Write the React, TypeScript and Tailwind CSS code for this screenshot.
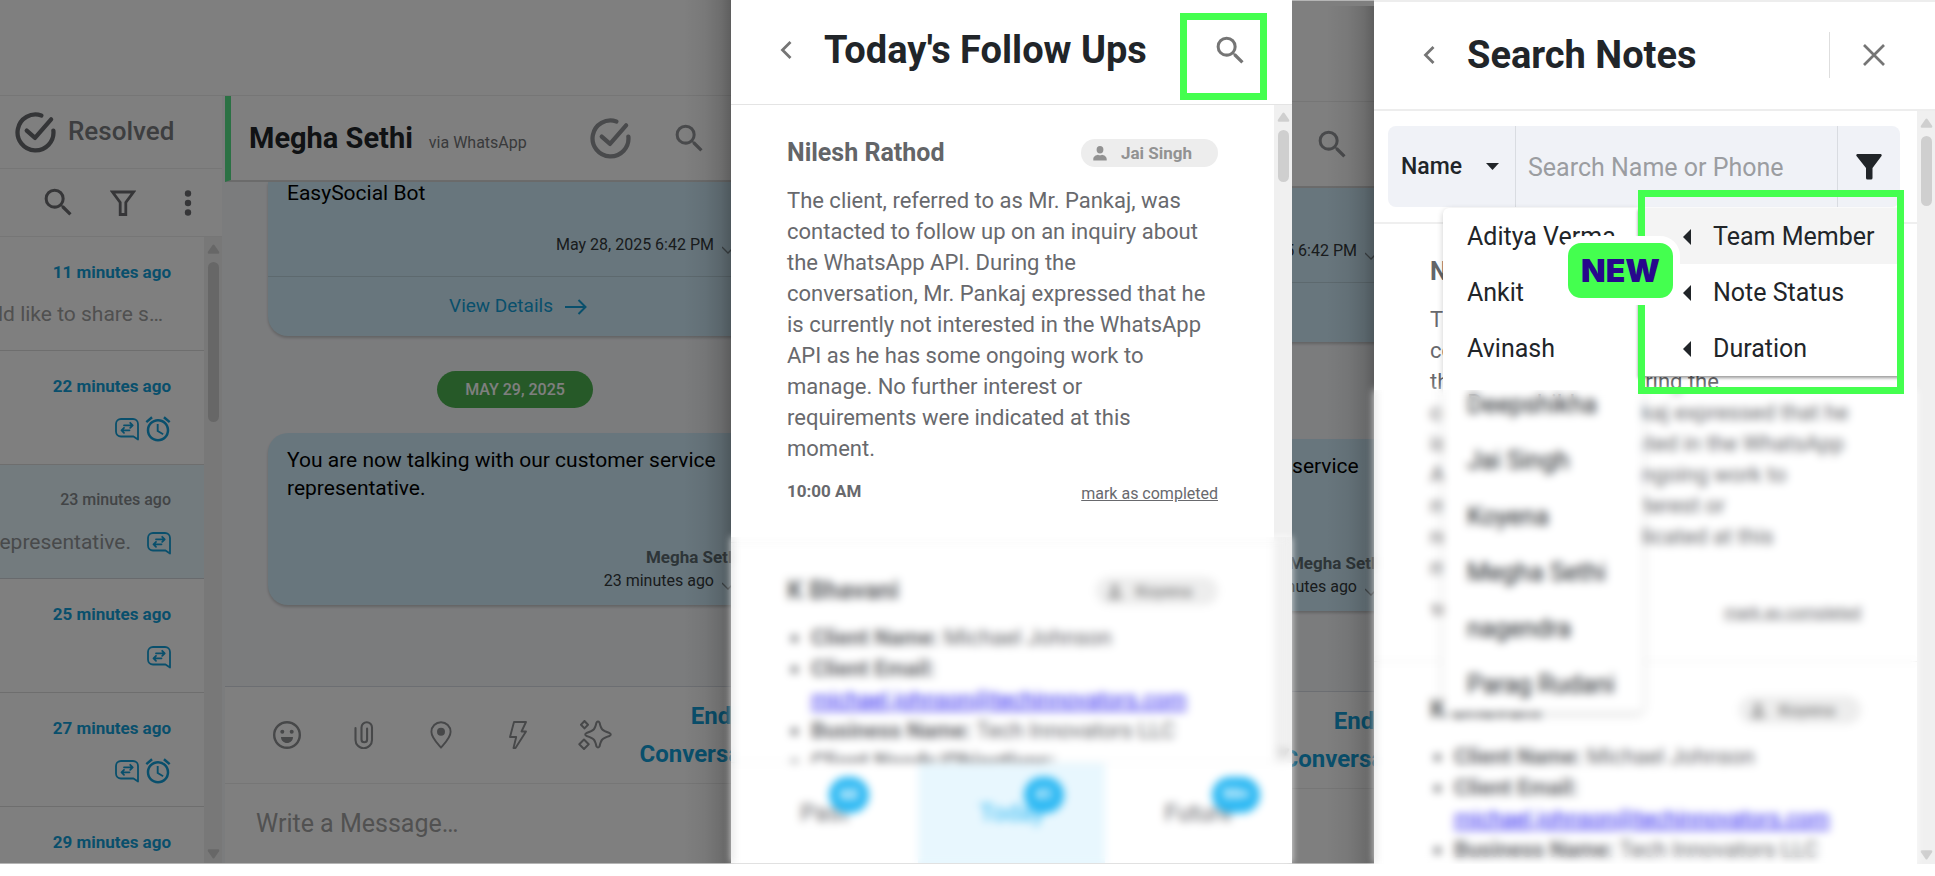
import { ReactNode } from "react";
import { MdAlarm, MdSearch } from "react-icons/md";

type IconProps = { className?: string };

const conversations = [
  { time: "11 minutes ago", preview: "ld like to share s…", swap: false, alarm: false, active: false },
  { time: "22 minutes ago", preview: "", swap: true, alarm: true, active: false },
  { time: "23 minutes ago", preview: "representative.", swap: true, alarm: false, active: true },
  { time: "25 minutes ago", preview: "", swap: true, alarm: false, active: false },
  { time: "27 minutes ago", preview: "", swap: true, alarm: true, active: false },
  { time: "29 minutes ago", preview: "", swap: true, alarm: false, active: false },
];

const members = [
  "Aditya Verma",
  "Ankit",
  "Avinash",
  "Deepshikha",
  "Jai Singh",
  "Koyena",
  "Megha Sethi",
  "nagendra",
  "Parag Rudani",
];

const filters = ["Team Member", "Note Status", "Duration"];

const tabs = [
  { label: "Past", count: "60", active: false },
  { label: "Today", count: "41", active: true },
  { label: "Future", count: "99+", active: false },
];

const CheckCircle = ({ className }: IconProps) => (
  <svg viewBox="0 0 42 42" fill="none" stroke="currentColor" strokeWidth="4.4" strokeLinecap="round" className={className}>
    <path d="M27 3.6A18.4 18.4 0 1 0 39.3 19" />
    <path d="M12 19l8.500 7.500L37 7.500" strokeLinejoin="round" />
  </svg>
);

const FunnelOutline = ({ className }: IconProps) => (
  <svg viewBox="0 0 26 26" fill="none" stroke="currentColor" strokeWidth="2.800" className={className}>
    <path d="M2.500 2h21l-7.700 10.500V24.500h-5.600V12.500z" />
  </svg>
);

const FunnelSolid = ({ className }: IconProps) => (
  <svg viewBox="0 0 26 26" fill="currentColor" className={className}>
    <path d="M1.500 0h23a1.200 1.200 0 0 1 1 1.900L16.500 14v10a1.500 1.500 0 0 1-1.500 1.500h-3.500A1.500 1.500 0 0 1 10 24V14L.5 1.900A1.200 1.200 0 0 1 1.500 0z" />
  </svg>
);

const Dots = ({ className }: IconProps) => (
  <svg viewBox="0 0 8 26" fill="currentColor" className={className}>
    <circle cx="4" cy="3.500" r="3.200" />
    <circle cx="4" cy="13" r="3.200" />
    <circle cx="4" cy="22.500" r="3.200" />
  </svg>
);

const SwapBubble = ({ className }: IconProps) => (
  <svg viewBox="0 0 24 24" fill="none" stroke="currentColor" strokeWidth="1.800" strokeLinecap="round" strokeLinejoin="round" className={className}>
    <path d="M6 2h12a5 5 0 0 1 5 5v15.500l-4.500-3H6a5 5 0 0 1-5-5V7a5 5 0 0 1 5-5z" />
    <path d="M9 8.300h8.500M15.200 5.800l2.500 2.500-2.500 2.500M14.500 13.300H6.500M9 10.800l-2.500 2.500L9 15.800" />
  </svg>
);

const ChevronLeft = ({ className }: IconProps) => (
  <svg viewBox="0 0 12 18" fill="none" stroke="currentColor" strokeWidth="2.800" className={className}>
    <path d="M10.500 1L2.500 9l8 8" />
  </svg>
);

const Close = ({ className }: IconProps) => (
  <svg viewBox="0 0 22 22" fill="none" stroke="currentColor" strokeWidth="2.700" className={className}>
    <path d="M1 1l20 20M21 1L1 21" />
  </svg>
);

const Tick = ({ className }: IconProps) => (
  <svg viewBox="0 0 20 12" fill="none" stroke="currentColor" strokeWidth="1.300" className={className}>
    <path d="M0 4l6 6L15 1" />
  </svg>
);

const ArrowRight = ({ className }: IconProps) => (
  <svg viewBox="0 0 22 16" fill="none" stroke="currentColor" strokeWidth="2" className={className}>
    <path d="M0 8h20.500M13.500 1l7 7-7 7" />
  </svg>
);

const Person = ({ className }: IconProps) => (
  <svg viewBox="0 0 14 15" fill="currentColor" className={className}>
    <ellipse cx="7" cy="3.700" rx="3.400" ry="3.700" />
    <path d="M.3 14.500v-1.500C.3 10.500 3 9 5 8.700a4 4 0 0 0 4 0c2 .3 4.700 1.800 4.700 4.300v1.500z" />
  </svg>
);

const Smile = ({ className }: IconProps) => (
  <svg viewBox="0 0 28 28" fill="none" className={className}>
    <circle cx="14" cy="14" r="12.800" stroke="currentColor" strokeWidth="2.400" />
    <circle cx="9.300" cy="10.800" r="2" fill="currentColor" />
    <circle cx="18.700" cy="10.800" r="2" fill="currentColor" />
    <path d="M8 16h12c0 3.600-2.700 6-6 6s-6-2.400-6-6z" fill="currentColor" />
  </svg>
);

const Clip = ({ className }: IconProps) => (
  <svg viewBox="0 0 20 28" fill="none" stroke="currentColor" strokeWidth="2.100" strokeLinecap="round" className={className}>
    <path d="M1.500 7v12a8 8 0 0 0 16.500 0V6.500a5 5 0 0 0-10.500 0V18.500a2.800 2.800 0 0 0 5.600 0V7.500" />
  </svg>
);

const Pin = ({ className }: IconProps) => (
  <svg viewBox="0 0 22 28" fill="none" className={className}>
    <path d="M11 1.200a9.600 9.600 0 0 1 9.600 9.600c0 6-5.600 11-9.600 15.700C7 21.800 1.400 16.800 1.400 10.800A9.600 9.600 0 0 1 11 1.200z" stroke="currentColor" strokeWidth="1.900" />
    <circle cx="11" cy="10.800" r="4" fill="currentColor" />
  </svg>
);

const Bolt = ({ className }: IconProps) => (
  <svg viewBox="0 0 18 28" fill="none" stroke="currentColor" strokeWidth="1.900" strokeLinejoin="round" className={className}>
    <path d="M5 1h12l-4.500 9.500H17L6.500 27H4.500l2.700-11H1z" />
  </svg>
);

const Sparkles = ({ className }: IconProps) => (
  <svg viewBox="0 0 34 30" fill="none" stroke="currentColor" strokeWidth="2" strokeLinejoin="round" className={className}>
    <path d="M18.500 2.500q1.500-2 3 0c1.500 6.500 2 8 10 10.500q2.500 1.500 0 3c-8 2.500-8.500 4-10 10.500q-1.500 2-3 0c-1.500-6.500-2-8-10-10.500q-2.500-1.500 0-3c8-2.500 8.500-4 10-10.500z" />
    <path d="M6.500 1l3.500 3.700-3.500 3.700L3 4.700zM6 19.500l4.700 4.800L6 29l-4.700-4.700z" />
  </svg>
);

const Triangle = ({ className }: IconProps) => (
  <svg viewBox="0 0 14 10" fill="currentColor" className={className}>
    <path d="M6 .7a1.300 1.300 0 0 1 2 0l5 7.300q.8 1.700-1 2H2q-1.800-.3-1-2z" />
  </svg>
);

const Scrollbar = ({ thumb }: { thumb: ReactNode }) => (
  <div className="flex w-[18px] shrink-0 flex-col items-center justify-between bg-[#f0f0f0] pt-[7px] pb-1 text-[#cfcfcf]">
    <div className="flex flex-col items-center gap-2">
      <Triangle className="h-[10px] w-[13px]" />
      {thumb}
    </div>
    <Triangle className="h-[10px] w-[13px] rotate-180" />
  </div>
);

const ConversationList = () => (
  <aside className="flex h-full w-[225px] shrink-0 flex-col bg-[#f7f8fb]">
    <div className="h-24 shrink-0 border-b border-[#ececec] bg-white" />
    <div className="mr-[3px] flex h-[73px] shrink-0 items-center gap-3 border-b border-[#ececec] bg-white pl-[15px] text-[#696b6f]">
      <CheckCircle className="h-[41px] w-[41px]" />
      <span className="pb-0.5 text-[26px] font-medium text-[#7a7c80]">Resolved</span>
    </div>
    <div className="mr-[3px] flex h-[67px] shrink-0 items-center justify-end bg-white pr-[30px] text-[#6c6d70]">
      <button aria-label="Search conversations" className="mr-[33px]">
        <MdSearch className="h-[37px] w-[37px]" />
      </button>
      <button aria-label="Filter conversations" className="mr-12">
        <FunnelOutline className="h-[26px] w-[26px]" />
      </button>
      <button aria-label="More options">
        <Dots className="h-[26px] w-2" />
      </button>
    </div>
    <div className="mr-[3px] flex min-h-0 flex-1 border-t border-[#ececec]">
      <ul className="min-w-0 flex-1 overflow-hidden bg-white">
        {conversations.map((item) => (
          <li
            key={item.time}
            className={
              item.active
                ? "flex h-[114px] flex-col items-end gap-[15px] border-b border-[#d0d5da] bg-[#e7f6fd] pt-[23px] pr-[33px]"
                : "flex h-[114px] flex-col items-end gap-[15px] border-b border-[#dcdcdc] pt-[23px] pr-[33px]"
            }
          >
            <time
              className={
                item.active
                  ? "text-base leading-6 font-medium text-[#84898c]"
                  : "text-[17px] leading-6 font-bold text-[#129fd8]"
              }
            >
              {item.time}
            </time>
            <div className="flex h-8 items-center justify-end gap-1 whitespace-nowrap text-[#129fd8]">
              {item.preview && (
                <span
                  className={
                    item.swap
                      ? "mr-3 text-[21px] text-[#919496]"
                      : "mr-2 text-[21px] text-[#a0a0a0]"
                  }
                >
                  {item.preview}
                </span>
              )}
              {item.swap && <SwapBubble className="h-6 w-6" />}
              {item.alarm && <MdAlarm className="-mr-0.5 h-[30px] w-[30px]" />}
            </div>
          </li>
        ))}
      </ul>
      <Scrollbar thumb={<div className="h-40 w-[11px] rounded-full bg-[#cfcfcf]" />} />
    </div>
  </aside>
);

const Chat = () => (
  <section className="relative flex h-full w-[506px] shrink-0 flex-col overflow-hidden bg-white">
    <div className="h-24 shrink-0 border-b border-[#ececec]" />
    <header className="flex h-[86px] shrink-0 items-center border-b-2 border-l-6 border-b-[#d6d6d6] border-l-[#57e389] pl-[18px]">
      <h2 className="pt-0.5 text-[29px] font-bold whitespace-nowrap text-[#212529]">Megha Sethi</h2>
      <span className="mt-2.5 ml-4 text-base whitespace-nowrap text-[#727477]">via WhatsApp</span>
      <div className="ml-auto flex items-center gap-10 pr-[23px] text-[#939598]">
        <button aria-label="Mark as resolved">
          <CheckCircle className="h-[41px] w-[41px]" />
        </button>
        <button aria-label="Search in conversation">
          <MdSearch className="h-[37px] w-[37px]" />
        </button>
      </div>
    </header>
    <div className="flex min-h-0 w-[580px] flex-1 flex-col items-center bg-[#f7f8fb]">
      <article className="ml-1.5 w-[500px] shrink-0 rounded-b-[20px] bg-[#d0edfa] shadow-[0_2px_3px_rgba(0,0,0,0.2)]">
        <div className="flex h-[95px] flex-col justify-between border-b border-[#bbd2dc] pr-[26px] pb-[19px] pl-[19px]">
          <p className="text-[21px] leading-[22px] text-black">EasySocial Bot</p>
          <div className="flex items-center justify-end gap-2 text-base leading-6 text-[#33383b]">
            <span>May 28, 2025 6:42 PM</span>
            <Tick className="mt-2 h-3 w-5 text-[#7c898f]" />
          </div>
        </div>
        <a href="#details" className="flex h-[59px] items-center justify-center gap-3 text-[19px] text-[#129fd8]">
          View Details
          <ArrowRight className="h-4 w-[22px]" />
        </a>
      </article>
      <span className="mt-[35px] mb-[25px] h-[37px] shrink-0 rounded-full bg-[#4cb251] px-7 text-base leading-[37px] font-medium text-white">
        MAY 29, 2025
      </span>
      <article className="ml-1.5 flex h-[172px] w-[500px] shrink-0 flex-col justify-between rounded-[20px] bg-[#d0edfa] pt-[13px] pr-[26px] pb-3 pl-[19px] shadow-[0_2px_3px_rgba(0,0,0,0.2)]">
        <p className="text-[21px] leading-7 text-black">
          You are now talking with our customer service
          <br />
          representative.
        </p>
        <div className="text-right text-base leading-6 text-[#33383b]">
          <p className="text-[17px] font-bold text-[#5c6a70]">Megha Sethi</p>
          <div className="flex items-center justify-end gap-2">
            <span>23 minutes ago</span>
            <Tick className="mt-2 h-3 w-5 text-[#7c898f]" />
          </div>
        </div>
      </article>
    </div>
    <div className="flex h-[97px] w-[600px] shrink-0 items-center border-t border-[#d9dde4] pl-[42px] text-[#8e9093]">
      <div className="flex items-center gap-[37px]">
        <button aria-label="Emoji" className="flex w-10 justify-center">
          <Smile className="h-7 w-7" />
        </button>
        <button aria-label="Attach file" className="flex w-10 justify-center">
          <Clip className="h-7 w-5" />
        </button>
        <button aria-label="Share location" className="flex w-10 justify-center">
          <Pin className="h-7 w-[22px]" />
        </button>
        <button aria-label="Quick replies" className="flex w-10 justify-center">
          <Bolt className="h-7 w-[18px]" />
        </button>
        <button aria-label="Assistant" className="flex w-10 justify-center">
          <Sparkles className="h-[30px] w-[34px]" />
        </button>
      </div>
      <button className="ml-4 w-40 shrink-0 text-2xl leading-[38px] font-bold text-[#129fd8]">
        End Conversation
      </button>
    </div>
    <div className="h-20 shrink-0 border-t border-[#ececec]">
      <input
        aria-label="Message"
        placeholder="Write a Message…"
        className="h-full w-full px-[31px] text-[25px] outline-none placeholder:text-[#a2a2a2]"
      />
    </div>
    <div className="pointer-events-none absolute inset-0 bg-black/50" />
    <div className="pointer-events-none absolute inset-y-0 right-0 w-12 bg-[linear-gradient(to_left,rgba(0,0,0,0.26),rgba(0,0,0,0.14)_10px,rgba(0,0,0,0.05)_26px,transparent)]" />
  </section>
);

const Assignee = ({ name }: { name: string }) => (
  <span className="flex h-7 items-center gap-[14px] rounded-full bg-[#ededed] pr-[26px] pl-3 text-[17px] font-bold text-[#929292]">
    <Person className="h-[15px] w-[14px]" />
    {name}
  </span>
);

const Notes = () => (
  <div className="text-[22px] leading-[31px] text-[#68696d]">
    <article className="h-[438px] border-b border-[#ececec] px-14 pt-8">
      <div className="flex items-center justify-between">
        <h3 className="text-[25px] leading-8 font-bold text-[#636568]">Nilesh Rathod</h3>
        <Assignee name="Jai Singh" />
      </div>
      <p className="mt-4 pr-2">
        The client, referred to as Mr. Pankaj, was contacted to follow up on an inquiry about the
        WhatsApp API. During the
        <br />
        conversation, Mr. Pankaj expressed that he is currently not interested in the WhatsApp API
        as he has some ongoing work to manage. No further interest or requirements were indicated
        at this moment.
      </p>
      <div className="mt-3 flex items-center justify-between leading-6">
        <time className="text-[17px] font-bold">10:00 AM</time>
        <button className="mt-1.5 text-base underline">mark as completed</button>
      </div>
    </article>
    <article className="px-14 pt-8">
      <div className="flex items-center justify-between">
        <h3 className="text-[25px] leading-8 font-bold text-[#636568]">K Bhavani</h3>
        <Assignee name="Koyena" />
      </div>
      <ul className="mt-[15px] list-disc pl-6">
        <li>
          <b>Client Name:</b> Michael Johnson
        </li>
        <li>
          <b>Client Email:</b>
          <br />
          <a href="mailto:michael.johnson@techinnovators.com" className="text-[#2a1cf0] underline">
            michael.johnson@techinnovators.com
          </a>
        </li>
        <li>
          <b>Business Name:</b> Tech Innovators LLC
        </li>
        <li>
          <b>Client Needs/Objectives:</b>
        </li>
      </ul>
    </article>
  </div>
);

const FollowUps = () => (
  <section className="relative z-10 flex h-full w-[561px] shrink-0 flex-col bg-white">
    <header className="flex h-[105px] shrink-0 items-center border-b border-[#e4e4e4] pr-[43px] pb-1 pl-[49px] text-[#757575]">
      <button aria-label="Back">
        <ChevronLeft className="h-[18px] w-3" />
      </button>
      <h1 className="ml-8 text-[38px] font-bold whitespace-nowrap text-[#212529]">Today's Follow Ups</h1>
      <button aria-label="Search notes" className="ml-auto">
        <MdSearch className="h-[37px] w-[37px]" />
      </button>
      <div className="pointer-events-none absolute top-[13px] right-[25px] h-[87px] w-[87px] border-7 border-[#44ff4f]" />
    </header>
    <div className="flex min-h-0 flex-1">
      <div className="min-w-0 flex-1 overflow-hidden">
        <Notes />
      </div>
      <Scrollbar thumb={<div className="h-[52px] w-[11px] rounded-full bg-[#cfcfcf]" />} />
    </div>
    <nav className="flex h-[101px] shrink-0 border-t border-[#f0f0f0] text-2xl">
      {tabs.map((tab) => (
        <button
          key={tab.label}
          className={
            tab.active
              ? "flex w-1/3 items-center justify-center bg-[#e8f7fe] text-[#2ab8f3]"
              : "flex w-1/3 items-center justify-center text-[#68696d]"
          }
        >
          <span className="relative">
            {tab.label}
            <span className="absolute -top-5 left-full -ml-5 flex h-9 min-w-10 items-center justify-center rounded-full bg-[#2ab8f3] px-2.5 text-base font-bold text-white">
              {tab.count}
            </span>
          </span>
        </button>
      ))}
    </nav>
    <div className="pointer-events-none absolute inset-x-0 top-[537px] bottom-0 shadow-[0_0_7px_rgba(255,255,255,0.8)] backdrop-blur-[4px]" />
  </section>
);

const SearchNotes = () => (
  <section className="relative z-10 flex h-full w-[561px] shrink-0 flex-col border-t-2 border-[#ededed] bg-white">
    <header className="flex h-[109px] shrink-0 items-center border-b-2 border-[#ededed] pr-[50px] pb-px pl-[49px] text-[#757575]">
      <button aria-label="Back">
        <ChevronLeft className="h-[18px] w-3" />
      </button>
      <h1 className="ml-8 text-[38px] font-bold whitespace-nowrap text-[#212529]">Search Notes</h1>
      <button aria-label="Close" className="ml-auto flex h-[46px] items-center border-l border-[#dedede] pl-[33px]">
        <Close className="h-[22px] w-[22px]" />
      </button>
    </header>
    <div className="flex min-h-0 flex-1">
      <div className="min-w-0 flex-1 overflow-hidden">
        <div className="border-b-2 border-[#efefef] pt-[15px] pr-[17px] pb-[15px] pl-[14px]">
          <div className="relative flex h-[81px] rounded-lg bg-[#f0f2f7]">
            <div className="relative w-[127px] shrink-0">
              <select
                aria-label="Search by"
                className="h-full w-full appearance-none pt-0.5 pl-[13px] text-[23px] font-medium text-[#212529] outline-none"
              >
                <option>Name</option>
                <option>Phone</option>
              </select>
              <svg
                viewBox="0 0 13 7"
                fill="currentColor"
                className="pointer-events-none absolute inset-y-0 right-4 my-auto h-[7px] w-[13px] text-[#212529]"
              >
                <path d="M0 0h13L6.500 7z" />
              </svg>
            </div>
            <input
              aria-label="Search name or phone"
              placeholder="Search Name or Phone"
              className="min-w-0 flex-1 border-x border-[#d9dce1] px-3 pt-0.5 text-[25px] outline-none placeholder:text-[#9b9da1]"
            />
            <button aria-label="Filters" className="flex w-[62px] shrink-0 items-center justify-center text-[#212529]">
              <FunnelSolid className="h-[26px] w-[26px]" />
            </button>
            <ul className="absolute top-full left-[55px] mt-px w-[200px] rounded-md bg-white text-[25px] text-[#212529] shadow-[0_2px_6px_rgba(0,0,0,0.2)]">
              {members.map((name) => (
                <li key={name}>
                  <button className="h-14 w-full pt-0.5 pl-6 text-left">{name}</button>
                </li>
              ))}
            </ul>
            <ul className="absolute top-full right-0 mt-px w-[262px] bg-white text-[25px] text-[#212529] shadow-[0_2px_3px_rgba(0,0,0,0.4)]">
              {filters.map((name) => (
                <li key={name} className="first:bg-[#f4f4f4]">
                  <button className="flex h-14 w-full items-center gap-[22px] pt-0.5 pl-[45px]">
                    <svg viewBox="0 0 8 16" fill="currentColor" className="h-4 w-2">
                      <path d="M8 0v16L0 8z" />
                    </svg>
                    {name}
                  </button>
                </li>
              ))}
            </ul>
            <div className="pointer-events-none absolute top-16 -right-1 z-20 h-[204px] w-[266px] border-7 border-[#44ff4f]" />
            <span className="absolute top-[110px] left-[173px] z-20 flex h-[69px] w-[119px] items-center justify-center rounded-[20px] border-7 border-white bg-[#44ff4f] font-[Inter] text-[32px] font-black text-[#27088c]">
              NEW
            </span>
          </div>
        </div>
        <Notes />
      </div>
      <Scrollbar thumb={<div className="h-[70px] w-[11px] rounded-full bg-[#cfcfcf]" />} />
    </div>
    <div className="pointer-events-none absolute top-[388px] right-[18px] bottom-0 left-0 shadow-[0_0_8px_rgba(255,255,255,0.8)] backdrop-blur-[4px]" />
  </section>
);

export default function App() {
  return (
    <main className="flex h-screen overflow-hidden bg-white pb-3 font-[Roboto,sans-serif]">
      <div className="flex min-w-0 flex-1 overflow-hidden border-b border-[#b5b5b5]">
        <div className="relative h-full w-[225px] shrink-0">
          <ConversationList />
          <div className="pointer-events-none absolute inset-0 bg-black/50" />
        </div>
        <Chat />
      </div>
      <div className="border-b border-[#d0d0d0]">
        <FollowUps />
      </div>
      <div className="flex w-[82px] shrink-0 justify-end overflow-hidden border-t border-b border-[#b5b5b5] bg-[#7f7f7f]">
        <div className="mt-[5px] h-full shrink-0">
          <Chat />
        </div>
      </div>
      <SearchNotes />
    </main>
  );
}
